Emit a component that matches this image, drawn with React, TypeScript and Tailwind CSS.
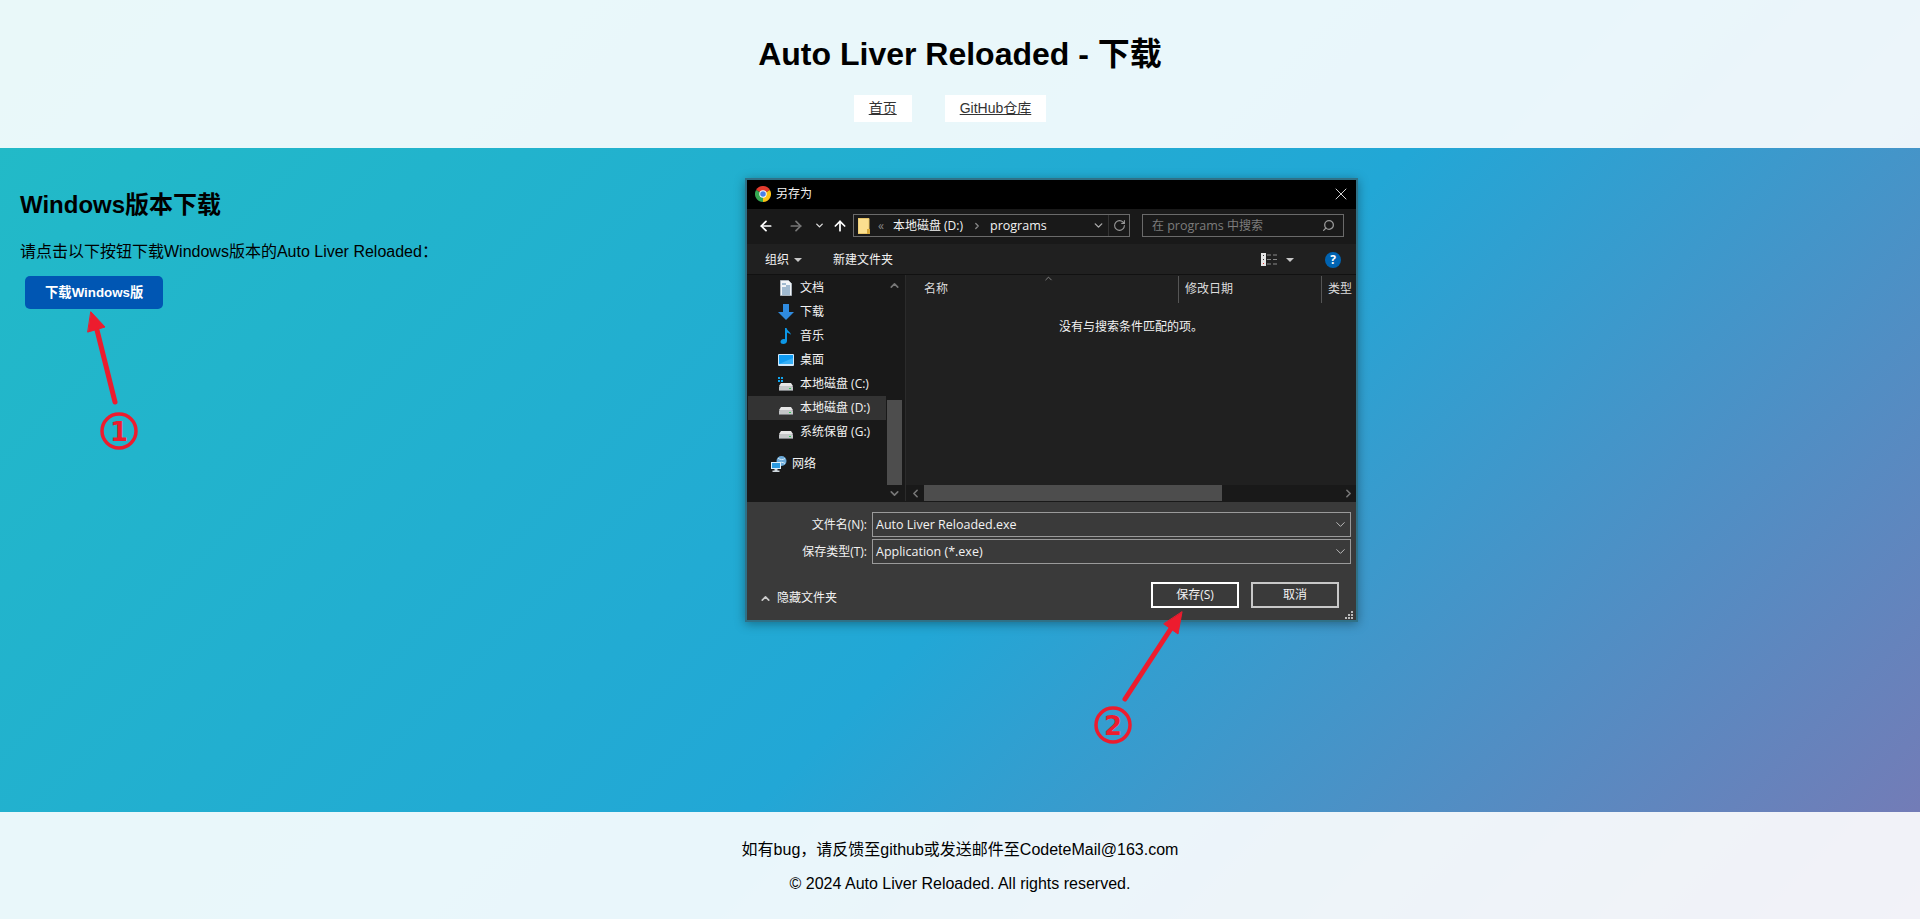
import { ArrowLeft, ArrowRight, ArrowUp, ChevronDown, ChevronUp, ChevronLeft, ChevronRight, RotateCw, Search, X } from "lucide-react";

const cjk = "font-['Liberation_Sans','Noto_Sans_CJK_SC',sans-serif]";
const winFont = "font-['Open_Sans','Noto_Sans_CJK_SC',sans-serif]";

function ChromeIcon() {
  return (
    <svg width="16" height="16" viewBox="0 0 16 16" className="shrink-0">
      <path d="M8 8 1.07 4A8 8 0 0 1 14.93 4Z" fill="#e33b2e" />
      <path d="M8 8 14.93 4A8 8 0 0 1 8 16Z" fill="#fbc116" />
      <path d="M8 8 8 16A8 8 0 0 1 1.07 4Z" fill="#35a751" />
      <circle cx="8" cy="8" r="3.7" fill="#fff" />
      <circle cx="8" cy="8" r="2.8" fill="#4a80e8" />
    </svg>
  );
}

function FolderIcon() {
  return (
    <svg width="12" height="16" viewBox="0 0 12 16" className="shrink-0">
      <path d="M0 .5h11v15H0Z" fill="#fbdf8f" stroke="#e8c468" />
      <path d="M9 11h3v5H9Z" fill="#d9a93a" />
    </svg>
  );
}

function DocIcon() {
  return (
    <svg width="12" height="16" viewBox="0 0 12 16">
      <path d="M.5.5h8l3 3v12H.5Z" fill="#f1f4f7" stroke="#a9b2bb" />
      <path d="M2 4h4M6 6h4M2 8h8M2 10h8M2 12h8M2 14h8" stroke="#4f7fa8" strokeWidth="1" />
    </svg>
  );
}

function DownloadIcon() {
  return (
    <svg width="16" height="16" viewBox="0 0 16 16">
      <path d="M5 0h6v8h5l-8 8-8-8h5Z" fill="#2f8be0" />
    </svg>
  );
}

function MusicIcon() {
  return (
    <svg width="14" height="16" viewBox="0 0 14 16">
      <path d="M6 0h1.6c.3 2.6 3.8 3.6 4.4 7-1-1.200-2.800-2-4-2.400V13c0 1.800-1.700 3-3.700 3C2.600 16 1.500 15 1.500 13.700c0-1.500 1.600-2.700 3.200-2.700.5 0 .9.100 1.300.2Z" fill="#0d97e6" />
    </svg>
  );
}

function DesktopIcon() {
  return (
    <svg width="16" height="12" viewBox="0 0 16 12">
      <rect width="16" height="12" rx="1" fill="#cfe8fb" />
      <rect x="1" y="1" width="14" height="9" fill="#0f9bf2" />
      <path d="M1 10 15 4v6Z" fill="#37b0f7" />
    </svg>
  );
}

function DriveIcon({ windows = false }: { windows?: boolean }) {
  return (
    <svg width="16" height="16" viewBox="0 0 16 16">
      <path d="M3 7h10l2 3H1Z" fill="#e6e6e6" />
      <rect x="1" y="10" width="14" height="5" rx="1" fill="#c4c6c8" />
      <rect x="1" y="14" width="14" height="1" fill="#7d8083" />
      <rect x="11" y="12" width="2" height="1" fill="#34c759" />
      {windows && <path d="M0 1h2v2H0ZM3 1h2v2H3ZM0 4h2v2H0ZM3 4h2v2H3Z" fill="#0ea5f0" />}
    </svg>
  );
}

function NetworkIcon() {
  return (
    <svg width="16" height="16" viewBox="0 0 16 16">
      <circle cx="10.500" cy="5" r="5" fill="#6aa9d8" />
      <path d="M7 2c2 2 5 2 7 .5M7 7c2-1 5-1 7 .5" stroke="#d8ecf8" strokeWidth="1" fill="none" />
      <rect x="0" y="6" width="10" height="7" fill="#dff1fb" />
      <rect x="1" y="7" width="8" height="5" fill="#2d9be0" />
      <path d="M3.500 13h3v1.500h2V16h-7v-1.500h2Z" fill="#cfd8de" />
    </svg>
  );
}

function ViewIcon() {
  return (
    <svg width="16" height="14" viewBox="0 0 16 14">
      <rect width="5" height="13" fill="#e4e4e4" />
      <path d="M2 2h1v1H2ZM2 6h1v1H2Z" fill="#333" />
      <path d="M2 10h1v1H2Z" fill="#e0322b" />
      <path d="M6 2h4M12 2h4M6 6.500h4M12 6.500h4M6 11h4M12 11h4" stroke="#8a8a8a" strokeWidth="1" />
    </svg>
  );
}

function Caret() {
  return <span className="w-0 h-0 border-x-[4px] border-x-transparent border-t-[4px] border-t-[#c8c8c8]" />;
}

const places = [
  { label: "文档", icon: <DocIcon /> },
  { label: "下载", icon: <DownloadIcon /> },
  { label: "音乐", icon: <MusicIcon /> },
  { label: "桌面", icon: <DesktopIcon /> },
  { label: "本地磁盘 (C:)", icon: <DriveIcon windows /> },
  { label: "本地磁盘 (D:)", icon: <DriveIcon />, active: true },
  { label: "系统保留 (G:)", icon: <DriveIcon /> },
];

function SaveDialog() {
  return (
    <div className={`w-[613px] h-[444px] mt-[30px] border-2 border-[#2f7187] flex flex-col shadow-[0_2px_10px_rgba(0,0,0,0.35)] text-[12px] leading-[16px] text-[#f2f2f2] ${winFont}`}>
      {/* title */}
      <div className="h-[29px] shrink-0 bg-black flex items-center pl-[8px] pr-[5px] pb-[2px] gap-[5px]">
        <ChromeIcon />
        <span>另存为</span>
        <X className="ml-auto text-white" size={20} strokeWidth={1} />
      </div>
      {/* address row */}
      <div className="h-[35px] shrink-0 bg-[#191919] flex items-center pl-[11px] pb-[2px]">
        <ArrowLeft size={16} strokeWidth={2.6} className="text-white" />
        <ArrowRight size={16} strokeWidth={2.6} className="ml-[14px] text-[#777]" />
        <ChevronDown size={11} strokeWidth={3} className="ml-[10px] text-[#ddd]" />
        <ArrowUp size={16} strokeWidth={2.6} className="ml-[7px] text-white" />
        <div className="ml-[5px] w-[277px] h-[23px] border border-[#6a6a6a] bg-[#191919] flex items-center pl-[4px] pr-[3px]">
          <FolderIcon />
          <span className="ml-[8px] text-[#888]">«</span>
          <span className="ml-[9px]">本地磁盘 (D:)</span>
          <ChevronRight size={10} strokeWidth={3} className="ml-[9px] text-[#888]" />
          <span className="ml-[8px] text-[12.5px]">programs</span>
          <ChevronDown size={13} strokeWidth={2.6} className="ml-auto text-[#aaa]" />
          <span className="ml-[3px] w-px h-[21px] bg-[#333]" />
          <RotateCw size={13} strokeWidth={2} className="ml-[4px] text-[#999]" />
        </div>
        <div className="ml-[12px] w-[202px] h-[23px] border border-[#6a6a6a] flex items-center pl-[9px] pr-[8px] text-[#7c7c7c]">
          <span>在 <span className="text-[12.5px]">programs</span> 中搜索</span>
          <Search size={13} strokeWidth={2.4} className="ml-auto -scale-x-100 text-[#999]" />
        </div>
      </div>
      {/* toolbar */}
      <div className="h-[31px] shrink-0 bg-[#202020] border-b border-[#111] flex items-center pl-[18px] pt-[1px]">
        <span>组织</span>
        <span className="ml-[5px] flex"><Caret /></span>
        <span className="ml-[31px]">新建文件夹</span>
        <span className="ml-auto flex"><ViewIcon /></span>
        <span className="ml-[9px] flex"><Caret /></span>
        <span className="ml-[31px] mr-[15px] w-[16px] h-[16px] rounded-full bg-[#0063b1] flex items-center justify-center font-bold text-white text-[12px]">?</span>
      </div>
      {/* body */}
      <div className="flex-1 flex min-h-0">
        <div className="w-[159px] shrink-0 bg-[#191919] flex pl-[1px] border-r border-[#2b2b2b]">
          <div className="w-[138px] shrink-0 pt-[1px]">
            {places.map((p) => (
              <div key={p.label} className={`h-[24px] flex items-center ${p.active ? "bg-[#333]" : ""}`}>
                <span className="w-[52px] flex justify-end pr-[4px]">
                  <span className="w-[20px] flex justify-center">{p.icon}</span>
                </span>
                <span>{p.label}</span>
              </div>
            ))}
            <div className="h-[24px] mt-[8px] flex items-center pl-[23px] gap-[5px]">
              <NetworkIcon />
              <span>网络</span>
            </div>
          </div>
          <div className="w-[15px] ml-[1px] flex flex-col items-center">
            <div className="h-[21px] flex items-center"><ChevronUp size={13} strokeWidth={3} className="text-[#777]" /></div>
            <div className="flex-1 w-full flex flex-col justify-end">
              <div className="w-full h-[85px] bg-[#4d4d4d]" />
            </div>
            <div className="h-[16px] flex items-center"><ChevronDown size={13} strokeWidth={3} className="text-[#777]" /></div>
          </div>
        </div>
        <div className="flex-1 flex flex-col bg-[#202020] min-w-0">
          <div className="h-[28px] shrink-0 flex items-center relative text-[#dcdcdc] whitespace-nowrap">
            <span className="ml-[18px] shrink-0">名称</span>
            <ChevronUp size={11} strokeWidth={1.5} className="absolute left-[137px] top-[-2px] text-[#aaa]" />
            <span className="ml-[230px] w-px h-[27px] shrink-0 bg-[#555]" />
            <span className="ml-[6px] shrink-0">修改日期</span>
            <span className="ml-[88px] w-px h-[27px] shrink-0 bg-[#555]" />
            <span className="ml-[6px] shrink-0">类型</span>
          </div>
          <div className="flex-1 flex justify-center pt-[16px]">没有与搜索条件匹配的项。</div>
          <div className="h-[16px] shrink-0 bg-[#191919] flex items-center">
            <span className="w-[18px] flex justify-center"><ChevronLeft size={13} strokeWidth={3} className="text-[#777]" /></span>
            <span className="w-[298px] h-full bg-[#4d4d4d]" />
            <span className="ml-auto mr-[1px] flex"><ChevronRight size={13} strokeWidth={3} className="text-[#777]" /></span>
          </div>
        </div>
      </div>
      {/* save form */}
      <div className="h-[119px] shrink-0 bg-[#3a3a3a] border-t border-[#191919] relative pt-[10px] pr-[5px]">
        <div className="flex items-center h-[25px] justify-end gap-[5px]">
          <span>文件名(N):</span>
          <div className="w-[479px] h-full border border-[#9a9a9a] flex items-center pl-[3px] pr-[2px] text-[12.5px]">
            Auto Liver Reloaded.exe
            <ChevronDown size={15} strokeWidth={1.4} className="ml-auto text-[#ccc]" />
          </div>
        </div>
        <div className="flex items-center h-[25px] mt-[2px] justify-end gap-[5px]">
          <span>保存类型(T):</span>
          <div className="w-[479px] h-full border border-[#9a9a9a] flex items-center pl-[3px] pr-[2px] text-[12.5px]">
            Application (*.exe)
            <ChevronDown size={15} strokeWidth={1.4} className="ml-auto text-[#ccc]" />
          </div>
        </div>
        <div className="flex items-center mt-[18px] pl-[12px] pr-[12px]">
          <span className="flex items-center pt-[6px]">
            <ChevronUp size={13} strokeWidth={3} className="text-[#ccc]" />
            <span className="ml-[5px]">隐藏文件夹</span>
          </span>
          <span className="ml-auto w-[88px] h-[26px] border-2 border-white flex items-center justify-center">保存(S)</span>
          <span className="ml-[12px] w-[88px] h-[26px] border-2 border-[#c8c8c8] flex items-center justify-center">取消</span>
        </div>
        <svg width="8" height="8" viewBox="0 0 8 8" className="absolute right-[3px] bottom-[1px]">
          <path d="M6 0h2v2H6ZM3 3h2v2H3ZM6 3h2v2H6ZM0 6h2v2H0ZM3 6h2v2H3ZM6 6h2v2H6Z" fill="#bbb" />
        </svg>
      </div>
    </div>
  );
}

export default function App() {
  return (
    <div className={`relative h-[919px] overflow-hidden flex flex-col text-black bg-[linear-gradient(135deg,#22bcc6_0%,#22a7d6_55%,#7a78b4_100%)] ${cjk}`}>
      <header className="h-[148px] shrink-0 bg-white/90 flex flex-col items-center">
        <h1 className="mt-[36px] text-[32px] leading-[37px] font-bold">Auto Liver Reloaded - 下载</h1>
        <nav className="mt-[22px] pr-[20px] flex gap-[33px] text-[14px] leading-[17px] text-[#333]">
          <a href="#" className="bg-white px-[15px] py-[5px] underline">首页</a>
          <a href="#" className="bg-white px-[15px] py-[5px] underline">GitHub仓库</a>
        </nav>
      </header>

      <main className="flex-1 flex">
        <section className="w-[745px] shrink-0 pl-[20px] pt-[43px]">
          <h2 className="text-[24px] leading-[28px] font-bold">Windows版本下载</h2>
          <p className="mt-[24px] text-[16px] leading-[18px]">请点击以下按钮下载Windows版本的Auto Liver Reloaded：</p>
          <button className="mt-[15px] ml-[5px] h-[33px] px-[20px] rounded-[5px] bg-[#0056b3] text-white text-[13.33px] font-bold">下载Windows版</button>
        </section>
        <SaveDialog />
      </main>

      <footer className="h-[107px] shrink-0 bg-white/90 flex flex-col items-center pt-[29px] text-[16px] leading-[18px]">
        <p>如有bug，请反馈至github或发送邮件至CodeteMail@163.com</p>
        <p className="mt-[16px]">© 2024 Auto Liver Reloaded. All rights reserved.</p>
      </footer>

      {/* red annotations drawn over the page */}
      <svg className="absolute inset-0 pointer-events-none" width="1920" height="919" viewBox="0 0 1920 919">
        <g fill="#ed1c2e" stroke="#ed1c2e" strokeLinecap="round">
          <path d="M115 402 97 330" strokeWidth="5" fill="none" />
          <path d="M91 312 105 327 88 332Z" strokeWidth="1" />
          <path d="M1125 699 1172 627" strokeWidth="5" fill="none" />
          <path d="M1182 612 1178 634 1164 624Z" strokeWidth="1" />
        </g>
        <g fill="none" stroke="#ed1c2e" strokeWidth="3.500">
          <circle cx="119" cy="431" r="17" />
          <circle cx="1113" cy="725" r="17" />
        </g>
        <g fill="#ed1c2e" fontSize="26" fontWeight="700" textAnchor="middle" fontFamily="DejaVu Sans, sans-serif">
          <text x="119" y="441">1</text>
          <text x="1113" y="735">2</text>
        </g>
      </svg>
    </div>
  );
}
